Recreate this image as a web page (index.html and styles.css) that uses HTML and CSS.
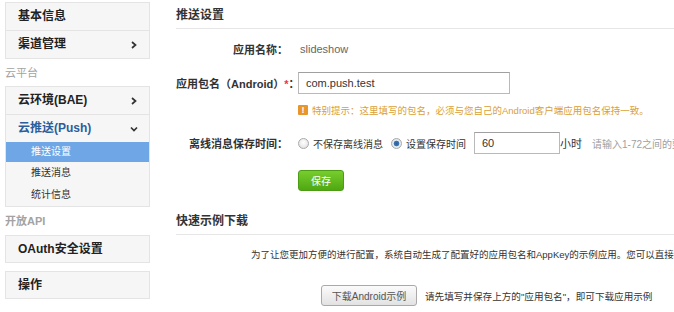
FILE: index.html
```html
<!DOCTYPE html>
<html>
<head>
	<meta charset="utf-8">
	<title>推送设置</title>
	<link rel="stylesheet" href="styles.css">
</head>
<body>
	<div class="sidebar">
		<ul class="menu">
			<li class="menu-item">基本信息</li>
			<li class="menu-item">渠道管理
				<svg class="arrow" width="8" height="8" viewBox="0 0 8 8"><polyline points="2,1 5.5,4 2,7" /></svg>
			</li>
		</ul>
		<p class="group">云平台</p>
		<ul class="menu">
			<li class="menu-item">云环境(BAE)
				<svg class="arrow" width="8" height="8" viewBox="0 0 8 8"><polyline points="2,1 5.5,4 2,7" /></svg>
			</li>
			<li class="menu-item open">云推送(Push)
				<svg class="arrow" width="8" height="8" viewBox="0 0 8 8"><polyline points="1,2.5 4,5.5 7,2.5" /></svg>
			</li>
			<li class="sub active">推送设置</li>
			<li class="sub">推送消息</li>
			<li class="sub">统计信息</li>
		</ul>
		<p class="group bold">开放API</p>
		<ul class="menu single">
			<li class="menu-item">OAuth安全设置</li>
		</ul>
		<ul class="menu single">
			<li class="menu-item">操作</li>
		</ul>
	</div>

	<div class="main">
		<h2 class="title">推送设置</h2>

		<div class="row first">
			<label class="label">应用名称：</label>
			<span class="value">slideshow</span>
		</div>

		<div class="row">
			<label class="label">应用包名（Android）<span class="star">*</span>：</label>
			<input class="field wide" type="text" value="com.push.test">
		</div>

		<div class="tip">
			<span class="tip-icon">!</span>
			特别提示：这里填写的包名，必须与您自己的Android客户端应用包名保持一致。
		</div>

		<div class="row offline">
			<label class="label">离线消息保存时间：</label>
			<label class="radio"><input type="radio" name="keep">不保存离线消息</label>
			<label class="radio"><input type="radio" name="keep" checked>设置保存时间</label>
			<input class="field short" type="text" value="60">
			<span class="unit">小时</span>
			<span class="help">请输入1-72之间的整数</span>
		</div>

		<div class="actions">
			<button class="btn-save">保存</button>
		</div>

		<h2 class="title second">快速示例下载</h2>

		<p class="desc">为了让您更加方便的进行配置，系统自动生成了配置好的应用包名和AppKey的示例应用。您可以直接下载示例应用进行测试。</p>

		<div class="download">
			<button class="btn-gray">下载Android示例</button>
			<span class="note">请先填写并保存上方的"应用包名"，即可下载应用示例</span>
		</div>
	</div>
</body>
</html>
```

FILE: styles.css
```css
body {
	margin: 0;
	display: flex;
	gap: 26px;
	overflow: hidden;
	background: #fff;
	font-family: "Liberation Sans", "Noto Sans CJK SC", sans-serif;
	font-size: 10px;
	color: #333;
}

/* 左侧菜单 */
.sidebar {
	width: 145px;
	flex-shrink: 0;
	margin: 2px 0 0 5px;
}
.menu {
	list-style: none;
	margin: 0;
	padding: 0;
	background: #f6f6f6;
	border: 1px solid #e4e4e4;
}
.menu + .menu {
	margin-top: 8px;
}
.menu-item {
	position: relative;
	height: 27px;
	line-height: 27px;
	padding-left: 12px;
	font-size: 12px;
	font-weight: bold;
	color: #222;
}
.single .menu-item {
	height: 26px;
	line-height: 26px;
}
.menu-item + .menu-item {
	border-top: 1px solid #e4e4e4;
}
.menu-item.open {
	color: #2a5e9c;
}
.arrow {
	position: absolute;
	right: 11px;
	top: 10px;
	fill: none;
	stroke: #333;
	stroke-width: 1.7;
}
.sub {
	height: 22px;
	line-height: 22px;
	padding-left: 25px;
	font-size: 10px;
	color: #333;
}
.sub.active {
	height: 20px;
	line-height: 20px;
	background: #6ea6e6;
	color: #fff;
}
.group {
	margin: 0;
	height: 27px;
	line-height: 28px;
	font-size: 11px;
	color: #a3a3a3;
}
.group.bold {
	height: 28px;
	font-weight: bold;
}

/* 右侧内容 */
.main {
	flex: 1;
	min-width: 0;
	white-space: nowrap;
}
.title {
	margin: 0;
	height: 28px;
	line-height: 30px;
	font-size: 12px;
	font-weight: bold;
	color: #333;
	border-bottom: 1px solid #e6e6e6;
}
.title.second {
	margin-top: 15px;
}
.row {
	display: flex;
	align-items: center;
	height: 22px;
	margin-top: 12px;
}
.row.first {
	margin-top: 9px;
}
.row.offline {
	margin-top: 15px;
}
.label {
	width: 112px;
	flex-shrink: 0;
	text-align: right;
	font-size: 11px;
	font-weight: bold;
	color: #333;
	margin-right: 10px;
}
.star {
	color: #e03c3c;
}
.value {
	color: #666;
	font-size: 11px;
	margin-left: 2px;
}
.field {
	box-sizing: border-box;
	height: 22px;
	border: 1px solid #b9b9b9;
	border-top-color: #a0a0a0;
	padding: 0 7px;
	font-family: inherit;
	font-size: 11px;
	color: #333;
	outline: none;
}
.wide {
	width: 212px;
}
.short {
	width: 86px;
}
.tip {
	display: flex;
	align-items: center;
	gap: 4px;
	margin: 9px 0 0 122px;
	color: #dba034;
	font-size: 9.5px;
}
.tip-icon {
	display: inline-block;
	width: 10px;
	height: 10px;
	line-height: 10px;
	text-align: center;
	border-radius: 1px;
	background: #e8962a;
	color: #fff;
	font-weight: bold;
	font-size: 9px;
}
.radio {
	display: flex;
	align-items: center;
	margin-right: 8px;
	color: #333;
}
.radio input {
	appearance: none;
	box-sizing: border-box;
	width: 11px;
	height: 11px;
	margin: 0 4px 0 0;
	border-radius: 50%;
	border: 1px solid #a9a9a9;
	background: radial-gradient(circle at 50% 40%, #fff, #dcdcdc);
}
.radio input:checked {
	background: radial-gradient(circle, #2e5f95 0, #3d77b4 2.5px, #e9eef4 3.2px, #d6d6d6 100%);
}
.unit {
	font-size: 11px;
	color: #333;
}
.help {
	margin-left: 10px;
	color: #a0a0a0;
}
.actions {
	margin: 16px 0 0 122px;
}
.btn-save {
	width: 46px;
	height: 21px;
	padding: 0;
	border: 1px solid #4c9c16;
	border-radius: 3px;
	background: linear-gradient(#78cd2e, #4fa811);
	color: #fff;
	font-family: inherit;
	font-size: 10px;
}
.desc {
	margin: 12px 0 0 75px;
	font-size: 9.5px;
	color: #333;
}
.download {
	display: flex;
	align-items: center;
	gap: 8px;
	margin: 24px 0 0 145px;
}
.btn-gray {
	width: 96px;
	height: 21px;
	padding: 0;
	border: 1px solid #a9a9a9;
	border-radius: 3px;
	background: linear-gradient(#fbfbfb, #e2e2e2);
	color: #555;
	font-family: inherit;
	font-size: 10px;
}
.note {
	color: #333;
	font-size: 9.6px;
}
```
